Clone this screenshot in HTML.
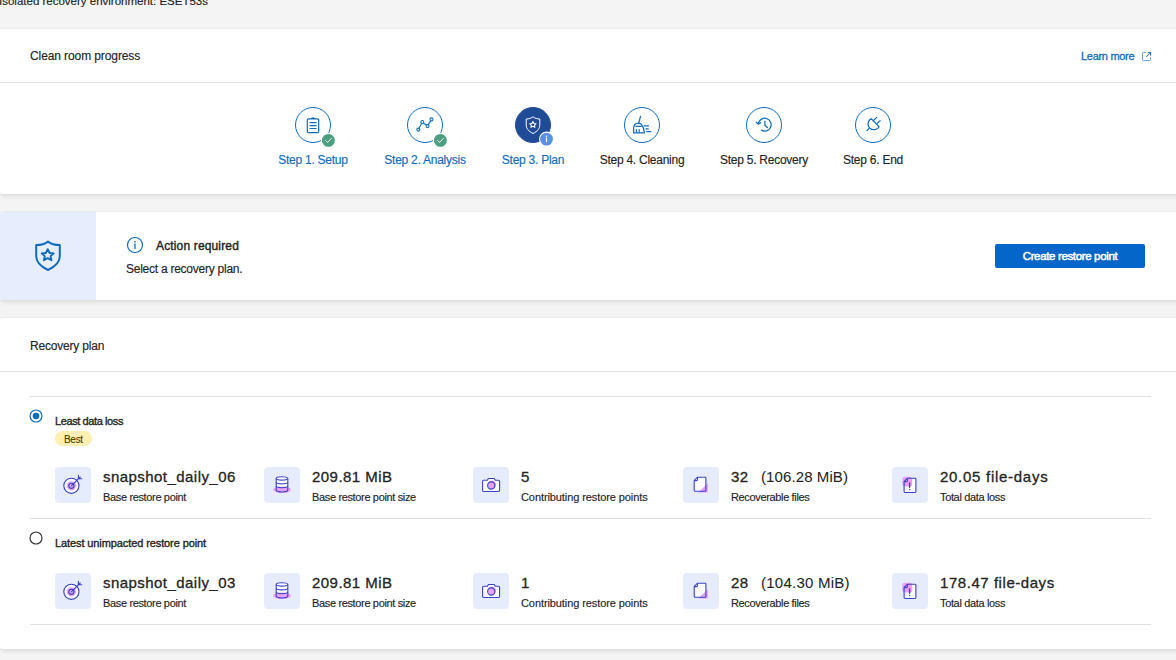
<!DOCTYPE html>
<html><head><meta charset="utf-8">
<style>
*{box-sizing:border-box;margin:0;padding:0}
html,body{width:1176px;height:660px;overflow:hidden;background:#f4f4f4;font-family:"Liberation Sans",sans-serif;color:#242424}
.t{position:absolute;white-space:nowrap;line-height:1;-webkit-text-stroke:0.15px currentColor}
.card{position:absolute;left:0;width:1190px;background:#fff;border-radius:2px;box-shadow:0 0 2px rgba(0,0,0,.07),0 2px 5px rgba(0,0,0,.10)}
.hr{position:absolute;height:1px;background:#e0e0e0}
svg{position:absolute;overflow:visible}
.step{position:absolute;top:107px;width:36px;height:36px;border-radius:50%;border:1.3px solid #0f6cbd}
.slbl{font-size:12px;letter-spacing:-0.25px;top:154px;color:#242424;width:120px;text-align:center}
.blue{color:#0f6cbd}
.ibox{position:absolute;width:36px;height:36px;border-radius:4px;background:#e7ecfd}
.val{font-size:15px;font-weight:400;-webkit-text-stroke:0.3px #242424;letter-spacing:0.45px;color:#242424}
.lbl{font-size:11px;letter-spacing:-0.35px;color:#242424}
</style></head><body>

<div class="t" style="left:-1px;top:-4.5px;font-size:11.5px;letter-spacing:0px;color:#242424">Isolated recovery environment: ESET53s</div>

<!-- card 1 -->
<div class="card" style="top:29px;height:165px"></div>
<div class="t" style="left:30px;top:50px;font-size:12px;letter-spacing:-0.1px">Clean room progress</div>
<div class="t blue" style="left:1081px;top:51px;font-size:11px;letter-spacing:-0.3px;-webkit-text-stroke:0.3px #0f6cbd;color:#0f6cbd">Learn more</div>
<div class="hr" style="left:0;top:82px;width:1176px"></div>

<!-- steps -->
<div class="step" style="left:295px"></div>
<div class="step" style="left:407px"></div>
<div class="step" style="left:515px;background:#1f4b97;border-color:#1f4b97"></div>
<div class="step" style="left:624px"></div>
<div class="step" style="left:746px"></div>
<div class="step" style="left:855px"></div>

<div class="t slbl" style="left:253px;color:#0f6cbd">Step 1. Setup</div>
<div class="t slbl" style="left:365px;color:#0f6cbd">Step 2. Analysis</div>
<div class="t slbl" style="left:473px;color:#0f6cbd">Step 3. Plan</div>
<div class="t slbl" style="left:582px">Step 4. Cleaning</div>
<div class="t slbl" style="left:704px">Step 5. Recovery</div>
<div class="t slbl" style="left:813px">Step 6. End</div>

<!-- card 2 -->
<div class="card" style="top:212px;height:88px;overflow:hidden"><div style="position:absolute;left:0;top:0;width:96px;height:88px;background:#e6edfd"></div></div>
<div class="t" style="left:156px;top:240px;font-size:12px;-webkit-text-stroke:0.4px #242424;letter-spacing:0.15px">Action required</div>
<div class="t" style="left:126px;top:263px;font-size:12px;letter-spacing:-0.25px">Select a recovery plan.</div>
<div style="position:absolute;left:995px;top:244px;width:150px;height:24px;background:#0466c8;border-radius:2px"></div>
<div class="t" style="left:995px;width:150px;text-align:center;top:251px;font-size:11.5px;-webkit-text-stroke:0.5px #fff;letter-spacing:-0.35px;color:#fff">Create restore point</div>

<!-- card 3 -->
<div class="card" style="top:318px;height:331px"></div>
<div class="t" style="left:30px;top:340px;font-size:12px;letter-spacing:-0.2px">Recovery plan</div>
<div class="hr" style="left:0;top:371px;width:1176px"></div>
<div class="hr" style="left:30px;top:396px;width:1121px"></div>
<div class="hr" style="left:30px;top:518px;width:1121px"></div>
<div class="hr" style="left:30px;top:624px;width:1121px"></div>

<div class="t" style="left:55px;top:416px;font-size:11px;letter-spacing:-0.4px;-webkit-text-stroke:0.35px #242424">Least data loss</div>
<div style="position:absolute;left:55px;top:431px;width:37px;height:15px;border-radius:8px;background:#fdefb0"></div>
<div class="t" style="left:64px;top:435px;font-size:10px;letter-spacing:-0.3px;color:#4a3c00;-webkit-text-stroke:0.1px #4a3c00">Best</div>
<div class="t" style="left:55px;top:538px;font-size:11px;letter-spacing:-0.1px;-webkit-text-stroke:0.35px #242424">Latest unimpacted restore point</div>

<!-- metrics row y=467 -->
<div class="ibox" style="left:55px;top:467px"><svg width="36" height="36" viewBox="0 0 36 36" style="left:0;top:0"><circle cx="16.4" cy="18.8" r="7.6" fill="#fff"/><circle cx="16.4" cy="18.8" r="4.6" fill="#e7a0f6"/><circle cx="16.4" cy="18.8" r="7.6" fill="none" stroke="#3743c6" stroke-width="1.1"/><circle cx="16.4" cy="18.8" r="2.6" fill="none" stroke="#3743c6" stroke-width="1.1"/><path d="M16.6 18.6L25.2 10M23.4 8.4V11.8H26.8" fill="none" stroke="#3743c6" stroke-width="1.1" stroke-linecap="round"/></svg></div>
<div class="t val" style="left:103px;top:469px">snapshot_daily_06</div>
<div class="t lbl" style="left:103px;top:492px">Base restore point</div>
<div class="ibox" style="left:264px;top:467px"><svg width="36" height="36" viewBox="0 0 36 36" style="left:0;top:0"><path d="M12.2 11.5C12.2 9.2 23.8 9.2 23.8 11.5V23C23.8 25.6 12.2 25.6 12.2 23Z" fill="#fff"/><ellipse cx="18" cy="22.8" rx="9" ry="3.2" fill="#e7a0f6"/><path d="M12.2 11.5C12.2 9.2 23.8 9.2 23.8 11.5V23C23.8 25.6 12.2 25.6 12.2 23Z" fill="none" stroke="#3743c6" stroke-width="1.1"/><path d="M12.2 11.5C12.2 13.6 23.8 13.6 23.8 11.5M12.2 15.3C12.2 17.4 23.8 17.4 23.8 15.3M12.2 19.1C12.2 21.2 23.8 21.2 23.8 19.1" fill="none" stroke="#3743c6" stroke-width="1.1"/></svg></div>
<div class="t val" style="left:312px;top:469px">209.81 MiB</div>
<div class="t lbl" style="left:312px;top:492px">Base restore point size</div>
<div class="ibox" style="left:473px;top:467px"><svg width="36" height="36" viewBox="0 0 36 36" style="left:0;top:0"><path d="M10.6 13.3H14.3L15.4 11.5H21.2L22.3 13.3H25.6Q26.6 13.3 26.6 14.3V23.6Q26.6 24.5 25.6 24.5H10.6Q9.6 24.5 9.6 23.6V14.3Q9.6 13.3 10.6 13.3Z" fill="#fff"/><circle cx="19" cy="17.8" r="4.2" fill="#e7a0f6"/><path d="M10.6 13.3H14.3L15.4 11.5H21.2L22.3 13.3H25.6Q26.6 13.3 26.6 14.3V23.6Q26.6 24.5 25.6 24.5H10.6Q9.6 24.5 9.6 23.6V14.3Q9.6 13.3 10.6 13.3Z" fill="none" stroke="#3743c6" stroke-width="1.1"/><circle cx="18.2" cy="18.5" r="3.6" fill="none" stroke="#3743c6" stroke-width="1.1"/></svg></div>
<div class="t val" style="left:521px;top:469px">5</div>
<div class="t lbl" style="left:521px;top:492px;letter-spacing:-0.09px">Contributing restore points</div>
<div class="ibox" style="left:683px;top:467px"><svg width="36" height="36" viewBox="0 0 36 36" style="left:0;top:0"><path d="M14.4 10.2H22Q22.9 10.2 22.9 11.1V23.4Q22.9 24.3 22 24.3H12.1Q11.2 24.3 11.2 23.4V13.4Z" fill="#fff"/><path d="M24.8 16.3V25.5H15.3Z" fill="#e7a0f6"/><path d="M14.4 10.2H22Q22.9 10.2 22.9 11.1V23.4Q22.9 24.3 22 24.3H12.1Q11.2 24.3 11.2 23.4V13.4Z" fill="none" stroke="#3743c6" stroke-width="1.1"/><path d="M11.4 13.6H13.6Q14.4 13.6 14.4 12.8V10.4" fill="none" stroke="#3743c6" stroke-width="1.1"/></svg></div>
<div class="t val" style="left:731px;top:469px">32</div>
<div class="t" style="left:761px;top:469px;font-size:15px;letter-spacing:0.1px;-webkit-text-stroke:0.05px currentColor">(106.28 MiB)</div>
<div class="t lbl" style="left:731px;top:492px">Recoverable files</div>
<div class="ibox" style="left:892px;top:467px"><svg width="36" height="36" viewBox="0 0 36 36" style="left:0;top:0"><path d="M15.3 11.2H23Q23.9 11.2 23.9 12.1V24.6Q23.9 25.5 23 25.5H13Q12.1 25.5 12.1 24.6V14.4Z" fill="#fff"/><rect x="10.4" y="9.8" width="9.8" height="9.8" rx="2.5" fill="#e7a0f6"/><path d="M15.3 11.2H23Q23.9 11.2 23.9 12.1V24.6Q23.9 25.5 23 25.5H13Q12.1 25.5 12.1 24.6V14.4Z" fill="none" stroke="#3743c6" stroke-width="1.1"/><path d="M12.3 14.6H14.5Q15.3 14.6 15.3 13.8V11.4" fill="none" stroke="#3743c6" stroke-width="1.1"/><path d="M17.6 16V20.2" stroke="#3743c6" stroke-width="1.4" stroke-linecap="round"/><circle cx="17.6" cy="22.4" r="0.75" fill="#3743c6"/></svg></div>
<div class="t val" style="left:940px;top:469px;letter-spacing:0.72px">20.05 file-days</div>
<div class="t lbl" style="left:940px;top:492px">Total data loss</div>
<!-- metrics row y=573 -->
<div class="ibox" style="left:55px;top:573px"><svg width="36" height="36" viewBox="0 0 36 36" style="left:0;top:0"><circle cx="16.4" cy="18.8" r="7.6" fill="#fff"/><circle cx="16.4" cy="18.8" r="4.6" fill="#e7a0f6"/><circle cx="16.4" cy="18.8" r="7.6" fill="none" stroke="#3743c6" stroke-width="1.1"/><circle cx="16.4" cy="18.8" r="2.6" fill="none" stroke="#3743c6" stroke-width="1.1"/><path d="M16.6 18.6L25.2 10M23.4 8.4V11.8H26.8" fill="none" stroke="#3743c6" stroke-width="1.1" stroke-linecap="round"/></svg></div>
<div class="t val" style="left:103px;top:575px">snapshot_daily_03</div>
<div class="t lbl" style="left:103px;top:598px">Base restore point</div>
<div class="ibox" style="left:264px;top:573px"><svg width="36" height="36" viewBox="0 0 36 36" style="left:0;top:0"><path d="M12.2 11.5C12.2 9.2 23.8 9.2 23.8 11.5V23C23.8 25.6 12.2 25.6 12.2 23Z" fill="#fff"/><ellipse cx="18" cy="22.8" rx="9" ry="3.2" fill="#e7a0f6"/><path d="M12.2 11.5C12.2 9.2 23.8 9.2 23.8 11.5V23C23.8 25.6 12.2 25.6 12.2 23Z" fill="none" stroke="#3743c6" stroke-width="1.1"/><path d="M12.2 11.5C12.2 13.6 23.8 13.6 23.8 11.5M12.2 15.3C12.2 17.4 23.8 17.4 23.8 15.3M12.2 19.1C12.2 21.2 23.8 21.2 23.8 19.1" fill="none" stroke="#3743c6" stroke-width="1.1"/></svg></div>
<div class="t val" style="left:312px;top:575px">209.81 MiB</div>
<div class="t lbl" style="left:312px;top:598px">Base restore point size</div>
<div class="ibox" style="left:473px;top:573px"><svg width="36" height="36" viewBox="0 0 36 36" style="left:0;top:0"><path d="M10.6 13.3H14.3L15.4 11.5H21.2L22.3 13.3H25.6Q26.6 13.3 26.6 14.3V23.6Q26.6 24.5 25.6 24.5H10.6Q9.6 24.5 9.6 23.6V14.3Q9.6 13.3 10.6 13.3Z" fill="#fff"/><circle cx="19" cy="17.8" r="4.2" fill="#e7a0f6"/><path d="M10.6 13.3H14.3L15.4 11.5H21.2L22.3 13.3H25.6Q26.6 13.3 26.6 14.3V23.6Q26.6 24.5 25.6 24.5H10.6Q9.6 24.5 9.6 23.6V14.3Q9.6 13.3 10.6 13.3Z" fill="none" stroke="#3743c6" stroke-width="1.1"/><circle cx="18.2" cy="18.5" r="3.6" fill="none" stroke="#3743c6" stroke-width="1.1"/></svg></div>
<div class="t val" style="left:521px;top:575px">1</div>
<div class="t lbl" style="left:521px;top:598px;letter-spacing:-0.09px">Contributing restore points</div>
<div class="ibox" style="left:683px;top:573px"><svg width="36" height="36" viewBox="0 0 36 36" style="left:0;top:0"><path d="M14.4 10.2H22Q22.9 10.2 22.9 11.1V23.4Q22.9 24.3 22 24.3H12.1Q11.2 24.3 11.2 23.4V13.4Z" fill="#fff"/><path d="M24.8 16.3V25.5H15.3Z" fill="#e7a0f6"/><path d="M14.4 10.2H22Q22.9 10.2 22.9 11.1V23.4Q22.9 24.3 22 24.3H12.1Q11.2 24.3 11.2 23.4V13.4Z" fill="none" stroke="#3743c6" stroke-width="1.1"/><path d="M11.4 13.6H13.6Q14.4 13.6 14.4 12.8V10.4" fill="none" stroke="#3743c6" stroke-width="1.1"/></svg></div>
<div class="t val" style="left:731px;top:575px">28</div>
<div class="t" style="left:761px;top:575px;font-size:15px;letter-spacing:0.25px;-webkit-text-stroke:0.05px currentColor">(104.30 MiB)</div>
<div class="t lbl" style="left:731px;top:598px">Recoverable files</div>
<div class="ibox" style="left:892px;top:573px"><svg width="36" height="36" viewBox="0 0 36 36" style="left:0;top:0"><path d="M15.3 11.2H23Q23.9 11.2 23.9 12.1V24.6Q23.9 25.5 23 25.5H13Q12.1 25.5 12.1 24.6V14.4Z" fill="#fff"/><rect x="10.4" y="9.8" width="9.8" height="9.8" rx="2.5" fill="#e7a0f6"/><path d="M15.3 11.2H23Q23.9 11.2 23.9 12.1V24.6Q23.9 25.5 23 25.5H13Q12.1 25.5 12.1 24.6V14.4Z" fill="none" stroke="#3743c6" stroke-width="1.1"/><path d="M12.3 14.6H14.5Q15.3 14.6 15.3 13.8V11.4" fill="none" stroke="#3743c6" stroke-width="1.1"/><path d="M17.6 16V20.2" stroke="#3743c6" stroke-width="1.4" stroke-linecap="round"/><circle cx="17.6" cy="22.4" r="0.75" fill="#3743c6"/></svg></div>
<div class="t val" style="left:940px;top:575px;letter-spacing:0.55px">178.47 file-days</div>
<div class="t lbl" style="left:940px;top:598px">Total data loss</div>


<!-- radios -->
<svg width="14" height="14" viewBox="0 0 14 14" style="left:29px;top:409px"><circle cx="7" cy="7" r="6" fill="#fff" stroke="#0f6cbd" stroke-width="1.15"/><circle cx="7" cy="7" r="3.3" fill="#0f6cbd"/></svg>
<svg width="14" height="14" viewBox="0 0 14 14" style="left:29px;top:531px"><circle cx="7" cy="7" r="6" fill="#fff" stroke="#333" stroke-width="1.15"/></svg>

<!-- external link icon -->
<svg width="10" height="10" viewBox="0 0 10 10" style="left:1141.5px;top:52.2px"><path d="M3.4 0.5H1.3Q0.5 0.5 0.5 1.3V7.7Q0.5 8.5 1.3 8.5H7.7Q8.5 8.5 8.5 7.7V5.6" fill="none" stroke="#6aa3dc" stroke-width="1" stroke-linecap="round"/><path d="M6 0.6H8.6V3.2M8.3 0.9L4.6 4.6" fill="none" stroke="#0f6cbd" stroke-width="1" stroke-linecap="round" stroke-linejoin="round"/></svg>

<!-- card2 shield -->
<svg width="28" height="32" viewBox="0 0 28 32" style="left:34px;top:240px"><path d="M14 1.6C11 4 7 5 2.2 5.1V16.3C2.2 22 5.8 26.2 14 30C22.2 26.2 25.8 22 25.8 16.3V5.1C21 5 17 4 14 1.6Z" fill="none" stroke="#0f6cbd" stroke-width="2" stroke-linejoin="round"/><path d="M13.7 9.2L15.6 13L19.7 13.4L16.6 16.1L17.5 20.2L13.7 18.1L9.9 20.2L10.8 16.1L7.7 13.4L11.8 13Z" fill="none" stroke="#0f6cbd" stroke-width="1.9" stroke-linejoin="round"/></svg>

<!-- info icon -->
<svg width="18" height="18" viewBox="0 0 18 18" style="left:126px;top:236px"><circle cx="9" cy="9" r="7.5" fill="none" stroke="#0f6cbd" stroke-width="1.2"/><path d="M9 7.8V12.6" stroke="#0f6cbd" stroke-width="1.3" stroke-linecap="round"/><circle cx="9" cy="5.6" r="0.85" fill="#0f6cbd"/></svg>

<!-- step icons -->
<svg width="36" height="36" viewBox="0 0 36 36" style="left:295px;top:107px"><rect x="12.3" y="11.9" width="11.4" height="13.7" rx="1.2" fill="none" stroke="#0f6cbd" stroke-width="1.2"/><path d="M16 11.9Q16 10.2 18 10.2Q20 10.2 20 11.9Z" fill="#0f6cbd"/><path d="M14.6 15.6H21.6M14.6 18.7H21.6M14.6 21.5H21.6" stroke="#0f6cbd" stroke-width="1.2"/><circle cx="33.4" cy="33.4" r="7.6" fill="#fff"/><circle cx="33.4" cy="33.4" r="6.4" fill="#4b9e80"/><path d="M30.6 33.6L32.6 35.4L36.3 31.5" fill="none" stroke="#fff" stroke-width="0.95" stroke-linecap="round" stroke-linejoin="round"/></svg>
<svg width="36" height="36" viewBox="0 0 36 36" style="left:407px;top:107px"><path d="M11.3 22.6L15.3 15L20.5 19.1L24.5 12.4" fill="none" stroke="#0f6cbd" stroke-width="1.1"/><circle cx="11.3" cy="22.6" r="1.5" fill="#fff" stroke="#0f6cbd" stroke-width="1.1"/><circle cx="15.3" cy="15" r="1.5" fill="#fff" stroke="#0f6cbd" stroke-width="1.1"/><circle cx="20.5" cy="19.1" r="1.5" fill="#fff" stroke="#0f6cbd" stroke-width="1.1"/><circle cx="24.5" cy="12.4" r="1.5" fill="#fff" stroke="#0f6cbd" stroke-width="1.1"/><circle cx="33.4" cy="33.4" r="7.6" fill="#fff"/><circle cx="33.4" cy="33.4" r="6.4" fill="#4b9e80"/><path d="M30.6 33.6L32.6 35.4L36.3 31.5" fill="none" stroke="#fff" stroke-width="0.95" stroke-linecap="round" stroke-linejoin="round"/></svg>
<svg width="36" height="36" viewBox="0 0 36 36" style="left:515px;top:107px"><path d="M18 9.8C16.2 11.2 13.8 12 11.2 12V17.8C11.2 21.3 13.2 24.1 18 26.5C22.8 24.1 24.8 21.3 24.8 17.8V12C22.2 12 19.8 11.2 18 9.8Z" fill="none" stroke="#fff" stroke-width="1" stroke-linejoin="round"/><path d="M17.9 14.5L18.9 16.5L21.1 16.7L19.5 18.1L19.9 20.3L17.9 19.2L15.9 20.3L16.3 18.1L14.7 16.7L16.9 16.5Z" fill="none" stroke="#fff" stroke-width="1.1" stroke-linejoin="round"/><circle cx="31.5" cy="32.1" r="7.5" fill="#fff"/><circle cx="31.5" cy="32.1" r="6.4" fill="#5b8fe3"/><path d="M31.5 31.1V34.6" stroke="#fff" stroke-width="1.2" stroke-linecap="round"/><circle cx="31.5" cy="29.3" r="0.7" fill="#fff"/></svg>
<svg width="36" height="36" viewBox="0 0 36 36" style="left:624px;top:107px"><path d="M16.5 9.3L14.6 16.3" stroke="#0f6cbd" stroke-width="1.25" stroke-linecap="round"/><path d="M9.6 25.8V21.6C9.6 18.2 11.6 16.1 14.4 16.1C17.3 16.1 18.6 18.6 19.5 21.5L20.4 25.8Z" fill="none" stroke="#0f6cbd" stroke-width="1.25" stroke-linejoin="round"/><path d="M11.4 19.3H17.6M12.4 22.2V25.6M15.2 22.2V25.6" stroke="#0f6cbd" stroke-width="1.25"/><path d="M20.2 18.8H24.5M22 21.8H24.3M22.8 24.6H26.8" stroke="#0f6cbd" stroke-width="1.25" stroke-linecap="round"/></svg>
<svg width="36" height="36" viewBox="0 0 36 36" style="left:746px;top:107px"><path d="M12.6 15.8A6.4 6.4 0 1 1 15.5 23.2" fill="none" stroke="#0f6cbd" stroke-width="1.25" stroke-linecap="round"/><path d="M10.3 15.2L12.4 17.2L14.6 15.7" fill="none" stroke="#0f6cbd" stroke-width="1.25" stroke-linecap="round" stroke-linejoin="round"/><path d="M18.9 14.2V18.2L21.6 20.7" fill="none" stroke="#0f6cbd" stroke-width="1.25" stroke-linecap="round" stroke-linejoin="round"/></svg>
<svg width="36" height="36" viewBox="0 0 36 36" style="left:855px;top:107px"><path d="M16.3 11.8L24.1 19.6L23.2 20.8C21 23.3 17 23.3 14.7 21C12.4 18.7 12.4 14.8 15 12.6Z" fill="none" stroke="#0f6cbd" stroke-width="1.25" stroke-linejoin="round"/><path d="M19 13.1L21.7 10.4M22.3 16.4L25.1 13.6M13.9 21.6L12 23.5" stroke="#0f6cbd" stroke-width="1.25" stroke-linecap="round"/></svg>

</body></html>
